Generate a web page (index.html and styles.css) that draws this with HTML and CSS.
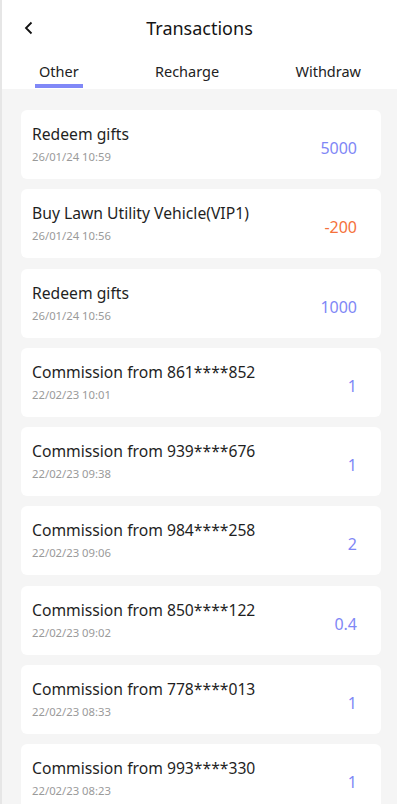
FILE: index.html
```html
<!DOCTYPE html>
<html>
<head>
<meta charset="utf-8">
<link rel="stylesheet" href="styles.css">
</head>
<body>
<div class="page">
  <header class="header">
    <span class="back">
      <svg width="10" height="14" viewBox="0 0 10 14"><path d="M7.5 1.5 L2 7 L7.5 12.5" fill="none" stroke="#111" stroke-width="1.8"/></svg>
    </span>
    <h1 class="title">Transactions</h1>
  </header>
  <nav class="tabs">
    <div class="tab active">Other</div>
    <div class="tab">Recharge</div>
    <div class="tab">Withdraw</div>
  </nav>
  <main class="list">
    <div class="card"><div class="info"><div class="name">Redeem gifts</div><div class="date">26/01/24 10:59</div></div><div class="amount">5000</div></div>
    <div class="card"><div class="info"><div class="name">Buy Lawn Utility Vehicle(VIP1)</div><div class="date">26/01/24 10:56</div></div><div class="amount neg">-200</div></div>
    <div class="card"><div class="info"><div class="name">Redeem gifts</div><div class="date">26/01/24 10:56</div></div><div class="amount">1000</div></div>
    <div class="card"><div class="info"><div class="name">Commission from 861****852</div><div class="date">22/02/23 10:01</div></div><div class="amount">1</div></div>
    <div class="card"><div class="info"><div class="name">Commission from 939****676</div><div class="date">22/02/23 09:38</div></div><div class="amount">1</div></div>
    <div class="card"><div class="info"><div class="name">Commission from 984****258</div><div class="date">22/02/23 09:06</div></div><div class="amount">2</div></div>
    <div class="card"><div class="info"><div class="name">Commission from 850****122</div><div class="date">22/02/23 09:02</div></div><div class="amount">0.4</div></div>
    <div class="card"><div class="info"><div class="name">Commission from 778****013</div><div class="date">22/02/23 08:33</div></div><div class="amount">1</div></div>
    <div class="card"><div class="info"><div class="name">Commission from 993****330</div><div class="date">22/02/23 08:23</div></div><div class="amount">1</div></div>
  </main>
</div>
</body>
</html>
```
FILE: styles.css
```css
* { box-sizing: border-box; margin: 0; padding: 0; }
html, body { height: 100%; overflow: hidden; }
body {
  font-family: "Noto Sans", "Open Sans", sans-serif;
  background: #f5f5f5;
  color: #222;
}
.page {
  border-left: 2px solid #e6e6e6;
  min-height: 100%;
  background: #f5f5f5;
}
.header {
  height: 56px;
  background: #fff;
  display: flex;
  align-items: center;
  justify-content: center;
  position: relative;
}
.back {
  position: absolute;
  left: 22px;
  top: 21px;
  display: flex;
}
.title {
  font-size: 18px;
  font-weight: 400;
  color: #151515;
  line-height: 24px;
}
.tabs {
  height: 33px;
  background: #fff;
  display: flex;
  justify-content: space-between;
  padding: 0 32px 0 33px;
}
.tab {
  font-size: 14.5px;
  color: #222;
  line-height: 22px;
  padding: 4px 4px 0;
  position: relative;
}
.tab.active::after {
  content: "";
  position: absolute;
  left: 0;
  right: 0;
  top: 28px;
  height: 4px;
  background: #8088f7;
}
.list {
  display: flex;
  flex-direction: column;
  gap: 10.25px;
  padding: 21px 16px 0 19px;
}
.card {
  height: 69px;
  background: #fff;
  border-radius: 6px;
  display: flex;
  justify-content: space-between;
  padding: 13px 24px 0 11px;
}
.name {
  font-size: 15.7px;
  line-height: 22px;
  color: #1f1f1f;
}
.date {
  font-size: 11.3px;
  line-height: 16px;
  margin-top: 4px;
  color: #9a9a9a;
}
.amount {
  font-size: 16px;
  line-height: 22px;
  margin-top: 14px;
  color: #7f87f6;
}
.amount.neg { color: #f5713b; }
```
